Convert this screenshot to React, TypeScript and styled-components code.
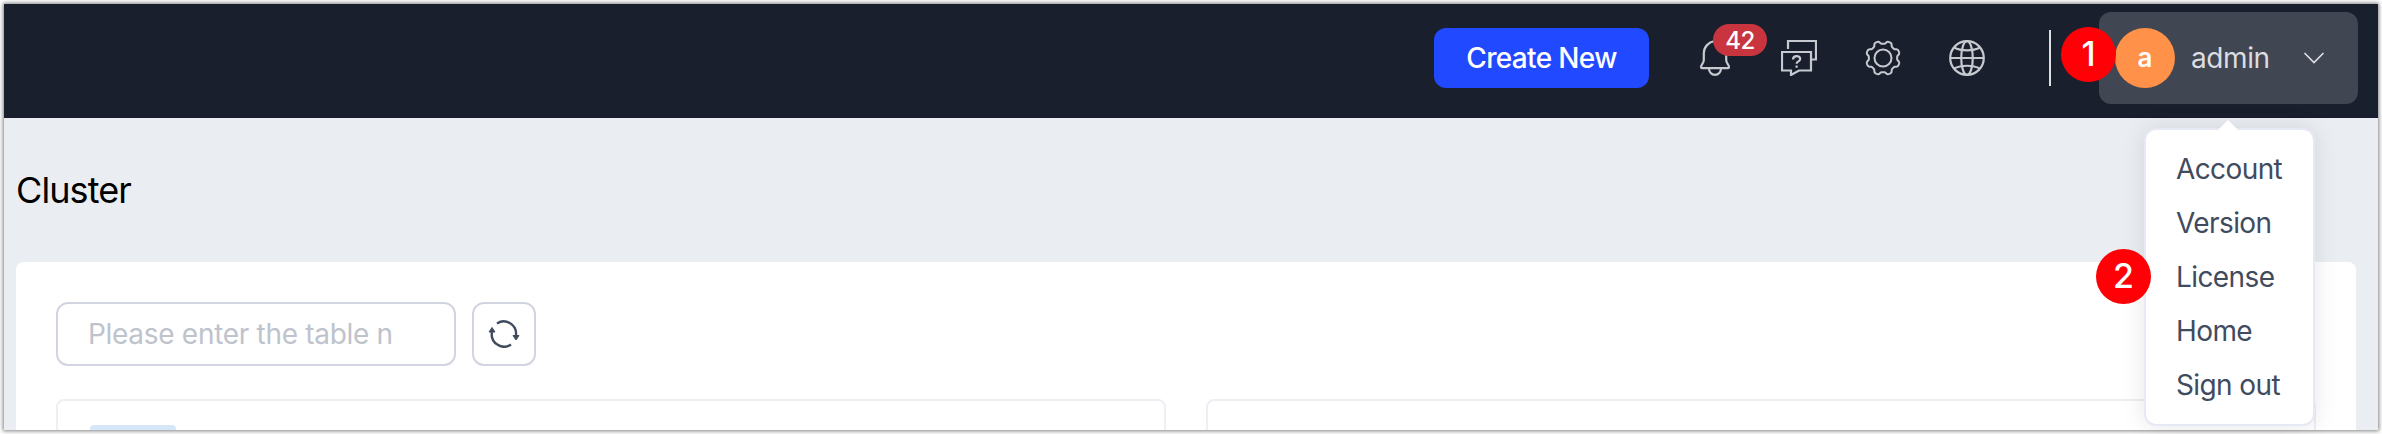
import React from "react";
import styled, { createGlobalStyle } from "styled-components";

const GlobalStyle = createGlobalStyle`
  * { box-sizing: border-box; }
  body {
    margin: 0;
    background: #fff;
    font-family: Inter, "Liberation Sans", sans-serif;
    font-size: 28px;
  }
`;

const Frame = styled.div`
  width: 2382px;
  height: 434px;
  padding: 4px;
  overflow: hidden;
`;

const Window = styled.div`
  display: flex;
  flex-direction: column;
  height: 426px;
  background: #eaedf2;
  box-shadow: 0 0 4px 1px rgba(0, 0, 0, 0.5);
`;

const Header = styled.header`
  display: flex;
  flex: none;
  align-items: center;
  justify-content: flex-end;
  height: 114px;
  padding: 0 20px 5px 0;
  background: #1a1f2d;
  border-bottom: 1px solid #1c1730;
`;

const CreateButton = styled.button`
  width: 215px;
  height: 60px;
  margin-right: 48px;
  padding: 0;
  border: 0;
  border-radius: 12px;
  background: #2149ff;
  color: #fff;
  font: 500 28px/60px Inter, sans-serif;
  letter-spacing: -0.65px;
`;

const IconList = styled.nav`
  display: flex;
  gap: 48px;
  color: #c6c9cf;
`;

const IconItem = styled.div`
  position: relative;
  width: 36px;
  height: 36px;
`;

const Glyph = styled.svg`
  display: block;
  fill: none;
  stroke: currentColor;
`;

const Count = styled.span`
  position: absolute;
  left: 16px;
  top: -16px;
  width: 54px;
  height: 32px;
  border-radius: 16px;
  background: #c8353f;
  color: #fff;
  font-size: 24px;
  font-weight: 500;
  letter-spacing: -0.5px;
  line-height: 33px;
  text-align: center;
`;

const Divider = styled.div`
  width: 2px;
  height: 56px;
  margin: 0 48px 0 64px;
  background: #dcdde0;
`;

const UserMenu = styled.div`
  position: relative;
  display: flex;
  align-items: center;
  width: 259px;
  height: 92px;
  padding-left: 16px;
  border-radius: 12px;
  background: #404652;
  color: #dbdde0;
`;

const Avatar = styled.div`
  width: 60px;
  height: 60px;
  border-radius: 50%;
  background: #ff9148;
  color: #fff;
  font-size: 26px;
  font-weight: 600;
  line-height: 60px;
  text-align: center;
`;

const UserName = styled.span`
  width: 112px;
  margin-left: 16px;
  letter-spacing: -0.4px;
`;

const Marker = styled.span<{ $x: number; $y: number }>`
  position: absolute;
  left: ${(p) => p.$x}px;
  top: ${(p) => p.$y}px;
  z-index: 3;
  width: 55px;
  height: 55px;
  border-radius: 50%;
  background: #ff0006;
  color: #fff;
  font-size: 34px;
  font-weight: 500;
  line-height: 54px;
  text-align: center;
`;

const Dropdown = styled.ul`
  position: absolute;
  left: 45px;
  top: 116px;
  z-index: 2;
  width: 171px;
  height: 298px;
  margin: 0;
  padding: 12px 0 0 30px;
  border: 2px solid #e6e8f3;
  border-radius: 12px;
  background: #fff;
  box-shadow: 0 0 24px rgba(0, 0, 0, 0.1);
  list-style: none;

  &::before {
    content: "";
    position: absolute;
    left: 72px;
    top: -10px;
    border: 10px solid transparent;
    border-top: 0;
    border-bottom-color: #fff;
  }
`;

const DropdownItem = styled.li`
  height: 54px;
  color: #414b5e;
  line-height: 54px;
  letter-spacing: -0.6px;
  white-space: nowrap;
`;

const Title = styled.h1`
  height: 144px;
  margin: 0;
  padding-left: 12px;
  color: #000;
  font-size: 36px;
  font-weight: 400;
  line-height: 144px;
  letter-spacing: -0.9px;
`;

const Panel = styled.main`
  flex: 1;
  min-height: 0;
  margin: 0 22px 0 12px;
  padding: 40px 40px 0;
  overflow: hidden;
  border-radius: 8px 8px 0 0;
  background: #fff;
`;

const Toolbar = styled.div`
  display: flex;
  gap: 16px;
`;

const Search = styled.input`
  width: 400px;
  height: 64px;
  padding: 0 30px;
  border: 2px solid #d2d5e0;
  border-radius: 12px;
  font: 400 28px Inter, sans-serif;
  letter-spacing: -0.3px;

  &::placeholder { color: #bec3cc; opacity: 1; }
`;

const RefreshButton = styled.button`
  display: grid;
  place-items: center;
  width: 64px;
  height: 64px;
  padding: 0;
  border: 2px solid #d2d5e0;
  border-radius: 12px;
  background: #fff;
  color: #414b5e;
`;

const Cards = styled.div`
  display: grid;
  grid-template-columns: 1110px 1110px;
  gap: 40px;
  margin-top: 33px;
`;

const Card = styled.section`
  height: 80px;
  padding: 24px 32px;
  border: 2px solid #eeeff4;
  border-radius: 8px;
`;

const Tag = styled.div`
  width: 86px;
  height: 30px;
  border-radius: 4px;
  background: #d7e7fa;
`;

const menuItems = ["Account", "Version", "License", "Home", "Sign out"];

// Eight rounded teeth, with a notch pointing straight up.
const gearOutline =
  Array.from({ length: 120 }, (_, i) => {
    const angle = (i / 120) * Math.PI * 2;
    const radius = 15.6 - 1.5 * Math.tanh(2 * Math.cos(8 * angle));
    const x = 18 + radius * Math.sin(angle);
    const y = 18 - radius * Math.cos(angle);
    return `${i ? "L" : "M"}${x.toFixed(2)} ${y.toFixed(2)}`;
  }).join("") + "Z";

export default function App() {
  return (
    <>
      <GlobalStyle />
      <Frame>
        <Window>
          <Header>
            <CreateButton>Create New</CreateButton>
            <IconList>
              <IconItem>
                <Glyph width="36" height="36" viewBox="0 0 36 36" strokeWidth="2.200" strokeLinejoin="round">
                  <path d="M18 1C11.500 2 6.800 7 6.800 13v7c0 3.500-2.800 4.500-2.800 7 0 .8.400 1.200 1 1.200h26c.6 0 1-.4 1-1.200 0-2.500-2.800-3.500-2.800-7v-7C29.200 7 24.500 2 18 1z" />
                  <path d="M12 28.500c0 3.500 2.500 6.300 6 6.300s6-2.800 6-6.300" />
                </Glyph>
                <Count>42</Count>
              </IconItem>
              <IconItem>
                <Glyph width="36" height="36" viewBox="0 0 36 36" strokeWidth="2.200">
                  <path d="M7 9V1h28v18.500h-4M1 12h29v18.500H18l-8 4.500v-4.500H1z" />
                  <path d="M12 19.500c0-4.500 7.200-4.500 7.200-.5 0 2.500-3.600 2.200-3.600 4.800M15.600 25.500v2.200" />
                </Glyph>
              </IconItem>
              <IconItem>
                <Glyph width="36" height="36" viewBox="0 0 36 36" strokeWidth="2" strokeLinejoin="round">
                  <circle cx="18" cy="18" r="8.500" />
                  <path d={gearOutline} />
                </Glyph>
              </IconItem>
              <IconItem>
                <Glyph width="36" height="36" viewBox="0 0 36 36" strokeWidth="2.200">
                  <circle cx="18" cy="18" r="16.800" />
                  <ellipse cx="18" cy="18" rx="5.800" ry="16.800" />
                  <path d="M1 18h34M5 7.500c7 3.700 19 3.700 26 0M5 28.500c7-3.700 19-3.700 26 0" />
                </Glyph>
              </IconItem>
            </IconList>
            <Divider />
            <UserMenu>
              <Avatar>a</Avatar>
              <UserName>admin</UserName>
              <Glyph width="22" height="14" viewBox="0 0 22 14" strokeWidth="1.700">
                <path d="M1.500 2l9.500 9.500L20.500 2" />
              </Glyph>
              <Marker $x={-38} $y={15}>1</Marker>
              <Marker $x={-3} $y={237}>2</Marker>
              <Dropdown>
                {menuItems.map((item) => (
                  <DropdownItem key={item}>{item}</DropdownItem>
                ))}
              </Dropdown>
            </UserMenu>
          </Header>
          <Title>Cluster</Title>
          <Panel>
            <Toolbar>
              <Search placeholder="Please enter the table n" />
              <RefreshButton aria-label="Refresh">
                <Glyph width="32" height="28" viewBox="0 0 32 28" strokeWidth="2.400">
                  <path d="M9 3.500A12.300 12.300 0 0 1 28 15M23 24.500A12.300 12.300 0 0 1 4 12" />
                  <path d="M25 15.500h6l-3 4.500zM1 12h6l-3-4.500z" fill="currentColor" strokeWidth="1" />
                </Glyph>
              </RefreshButton>
            </Toolbar>
            <Cards>
              <Card><Tag /></Card>
              <Card />
            </Cards>
          </Panel>
        </Window>
      </Frame>
    </>
  );
}
